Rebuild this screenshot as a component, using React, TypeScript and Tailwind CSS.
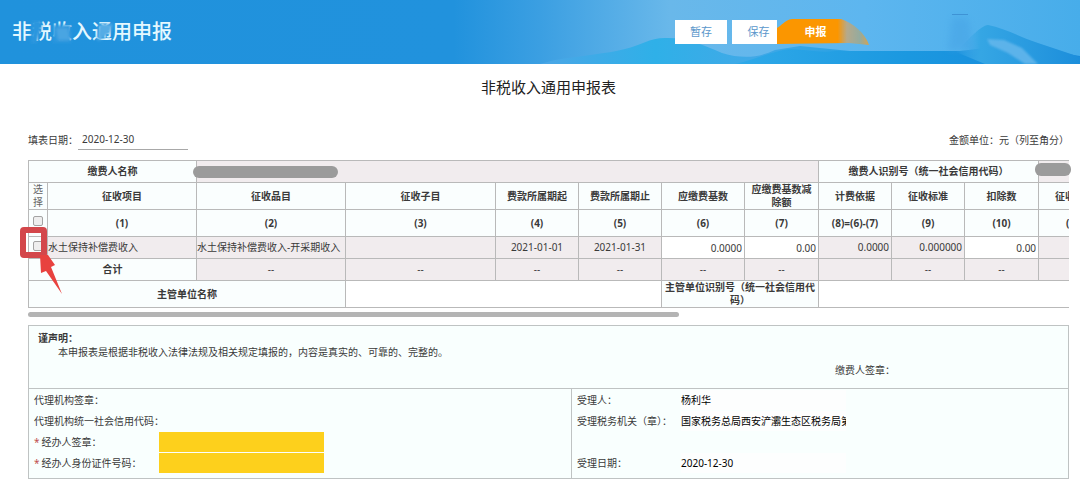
import { useState } from "react";
import clsx from "clsx";

interface Column {
    label: string;
    index: string;
    width: number;
}

const columns: Column[] = [
    { label: "征收项目", index: "(1)", width: 149 },
    { label: "征收品目", index: "(2)", width: 149 },
    { label: "征收子目", index: "(3)", width: 150 },
    { label: "费款所属期起", index: "(4)", width: 83 },
    { label: "费款所属期止", index: "(5)", width: 83 },
    { label: "应缴费基数", index: "(6)", width: 83 },
    { label: "应缴费基数减除额", index: "(7)", width: 74 },
    { label: "计费依据", index: "(8)=(6)-(7)", width: 73 },
    { label: "征收标准", index: "(9)", width: 73 },
    { label: "扣除数", index: "(10)", width: 74 },
    { label: "征收比例", index: "(11)", width: 73 },
];

const totals = ["--", "--", "--", "--", "--", "--", "", "--", "--", ""];

const CELL = "border border-[#b9b9b9] p-0";
const HEAD = `${CELL} bg-[#fafefe] text-center font-bold`;
const READONLY = `${CELL} bg-[#f1ecee]`;

function HeaderScenery() {
    return (
        <svg
            className="absolute inset-0 h-full w-full"
            viewBox="0 0 1080 64"
            preserveAspectRatio="none"
            aria-hidden="true"
        >
            <defs>
                <linearGradient id="sky" x1="0" x2="1" y1="0" y2="0">
                    <stop offset="0" stopColor="#2092dc" />
                    <stop offset="0.42" stopColor="#2192dd" />
                    <stop offset="0.5" stopColor="#3b9fe2" />
                    <stop offset="0.62" stopColor="#69b8ea" />
                    <stop offset="0.8" stopColor="#5db6ef" />
                    <stop offset="1" stopColor="#47adea" />
                </linearGradient>
                <linearGradient id="hill" x1="0" x2="1" y1="0" y2="0">
                    <stop offset="0" stopColor="#4ba6e6" />
                    <stop offset="0.35" stopColor="#2fb0e8" />
                    <stop offset="0.65" stopColor="#41a9e7" />
                    <stop offset="1" stopColor="#259fe2" />
                </linearGradient>
                <linearGradient id="ridge" x1="0" x2="1" y1="0" y2="0">
                    <stop offset="0" stopColor="#2fa9e8" />
                    <stop offset="0.5" stopColor="#1b98e0" />
                    <stop offset="1" stopColor="#1888da" />
                </linearGradient>
                <linearGradient id="peak" x1="0" x2="1" y1="0" y2="0">
                    <stop offset="0" stopColor="#4fb0ec" stopOpacity="0" />
                    <stop offset="0.2" stopColor="#35a6e4" />
                    <stop offset="1" stopColor="#1c8edb" />
                </linearGradient>
                <filter id="soft" x="-50%" y="-30%" width="200%" height="160%">
                    <feGaussianBlur stdDeviation="3" />
                </filter>
                <filter id="softer" x="-30%" y="-30%" width="160%" height="160%">
                    <feGaussianBlur stdDeviation="1" />
                </filter>
            </defs>
            <rect width="1080" height="64" fill="url(#sky)" />
            <path
                d="M555 60C585 55 605 54 625 49C642 45 650 37 668 38C690 38 705 46 722 53C742 59 758 58 775 50L800 46L850 51L870 64H540Z"
                fill="url(#hill)"
            />
            <path
                d="M735 64C760 58 775 50 792 49C808 50 820 53 835 51H960L1010 45L1080 56V64Z"
                fill="url(#ridge)"
            />
            <path d="M956 52C970 38 980 26 988 25C1004 28 1020 37 1038 43L1080 57V64H985Z" fill="url(#peak)" />
            <path d="M952 18H966C974 24 966 42 976 50H948Z" fill="#429fe3" opacity="0.4" filter="url(#soft)" />
            <path d="M952 14.5H968" stroke="#3a8cd0" strokeWidth="1" opacity="0.8" />
            <path
                d="M987 39L1004 40L1022 48L1038 64H1025L1008 53L990 45Z"
                fill="#65b7ec"
                opacity="0.85"
                filter="url(#softer)"
            />
        </svg>
    );
}

/* soft patches lying over the page heading */
function HeadingSmudge() {
    return (
        <svg
            className="pointer-events-none absolute left-0 top-0 h-6 w-40"
            viewBox="0 0 160 24"
            aria-hidden="true"
        >
            <defs>
                <filter id="smudge" x="-40%" y="-40%" width="180%" height="180%">
                    <feGaussianBlur stdDeviation="1.5" />
                </filter>
            </defs>
            <g filter="url(#smudge)">
                <path d="M20 0H30L29 10L24 24H19Z" fill="#2b96de" />
                <path d="M41 5H59V23H41Z" fill="#2b96de" />
                <path d="M44 8H56L58 20H46Z" fill="#4aa5e2" />
                <path d="M87 4H101L98 13L88 20H85Z" fill="#55ace5" />
            </g>
        </svg>
    );
}

function PageHeader() {
    return (
        <header className="relative flex h-16 items-center bg-[#2092dc] pl-3">
            <HeaderScenery />
            <div className="relative">
                <h1 className="text-[20px] font-medium leading-6 text-[#e4f8ff]">非税收入通用申报</h1>
                <HeadingSmudge />
            </div>
            <nav className="relative ml-auto mr-[210px] flex items-center text-[11px]">
                <button type="button" className="h-6 w-[52px] bg-white text-[#5b97cb]">
                    暂存
                </button>
                <button type="button" className="ml-[5px] h-6 w-[45px] bg-white pl-2 text-[#5b97cb]">
                    保存
                </button>
                <button type="button" className="relative h-7 w-[93px] text-white">
                    <svg className="absolute inset-0 h-full w-full" viewBox="0 0 93 28" aria-hidden="true">
                        <defs>
                            <linearGradient id="submit" x1="0" x2="1" y1="0" y2="0">
                                <stop offset="0" stopColor="#fb9600" />
                                <stop offset="0.66" stopColor="#fb9600" />
                                <stop offset="0.76" stopColor="#b5a98b" />
                                <stop offset="0.9" stopColor="#94ab9f" />
                                <stop offset="1" stopColor="#d3a352" />
                            </linearGradient>
                            <filter id="edge">
                                <feGaussianBlur stdDeviation="0.7" />
                            </filter>
                        </defs>
                        <path
                            d="M0 26V10C4 8 8 2 15 1H64C76 5 88 15 92 27L72 25Z"
                            fill="url(#submit)"
                            filter="url(#edge)"
                        />
                    </svg>
                    <span className="relative block pr-4 font-bold">申报</span>
                </button>
            </nav>
        </header>
    );
}

function CheckBox({ label, checked, onChange }: { label: string; checked: boolean; onChange: () => void }) {
    return (
        <input
            type="checkbox"
            aria-label={label}
            checked={checked}
            onChange={onChange}
            className="mx-auto mb-1 block size-[10px] appearance-none rounded-[2px] border border-[#a3a3a3] bg-[#eeeeee] checked:bg-[#5b97cb]"
        />
    );
}

function NumberInput({ label, value }: { label: string; value: string }) {
    return (
        <input
            aria-label={label}
            defaultValue={value}
            className="block h-5 w-full bg-white pr-[2px] text-right text-[10px] outline-none"
        />
    );
}

function DeclarationTable() {
    const [selected, setSelected] = useState(false);
    const toggle = () => setSelected((v) => !v);

    return (
        <div className="relative">
            <div className="overflow-hidden">
                <table className="w-[1665px] table-fixed border-collapse leading-[13px]">
                    <colgroup>
                        <col className="w-[19px]" />
                        {columns.map((c) => (
                            <col key={c.index} style={{ width: c.width }} />
                        ))}
                        <col />
                    </colgroup>
                    <tbody>
                        <tr className="h-[22px]">
                            <th colSpan={2} className={HEAD}>缴费人名称</th>
                            <td colSpan={6} className={READONLY} />
                            <th colSpan={3} className={HEAD}>缴费人识别号（统一社会信用代码）</th>
                            <td colSpan={2} className={READONLY} />
                        </tr>
                        <tr className="h-[27px]">
                            <td className={`${CELL} bg-[#fafefe] text-center text-[#666666]`}>选择</td>
                            {columns.map((c) => (
                                <th key={c.index} className={HEAD}>
                                    <p className="px-[5px] [overflow-wrap:anywhere]">{c.label}</p>
                                </th>
                            ))}
                            <th className={HEAD} />
                        </tr>
                        <tr className="h-[27px]">
                            <td className={HEAD}>
                                <CheckBox label="全选" checked={selected} onChange={toggle} />
                            </td>
                            {columns.map((c) => (
                                <th key={c.index} className={HEAD}>{c.index}</th>
                            ))}
                            <th className={HEAD} />
                        </tr>
                        <tr className="h-[22px] whitespace-nowrap">
                            <td className={HEAD}>
                                <CheckBox label="选择本行" checked={selected} onChange={toggle} />
                            </td>
                            <td className={READONLY}>水土保持补偿费收入</td>
                            <td className={READONLY}>水土保持补偿费收入-开采期收入</td>
                            <td className={READONLY} />
                            <td className={clsx(READONLY, "text-center")}>2021-01-01</td>
                            <td className={clsx(READONLY, "text-center")}>2021-01-31</td>
                            <td className={CELL}><NumberInput label="应缴费基数" value="0.0000" /></td>
                            <td className={CELL}><NumberInput label="应缴费基数减除额" value="0.00" /></td>
                            <td className={READONLY}><p className="pr-[2px] text-right">0.0000</p></td>
                            <td className={READONLY}><p className="pr-[2px] text-right">0.000000</p></td>
                            <td className={CELL}><NumberInput label="扣除数" value="0.00" /></td>
                            <td className={READONLY} />
                            <td className={READONLY} />
                        </tr>
                        <tr className="h-[22px]">
                            <th colSpan={2} className={HEAD}>合计</th>
                            {totals.map((t, i) => (
                                <td key={i} className={clsx(READONLY, "text-center")}>{t}</td>
                            ))}
                            <td className={READONLY} />
                        </tr>
                        <tr className="h-[27px]">
                            <th colSpan={3} className={HEAD}>主管单位名称</th>
                            <td colSpan={3} className={CELL} />
                            <th colSpan={2} className={HEAD}>主管单位识别号（统一社会信用代码）</th>
                            <td colSpan={5} className={CELL} />
                        </tr>
                    </tbody>
                </table>
            </div>

            {/* masked values */}
            <span className="absolute left-[165px] top-[6px] h-3 w-[145px] rounded-full bg-[#9b9b9b]" />
            <span className="absolute left-[1007px] top-[3px] h-[13px] w-9 rounded-md bg-[#9b9b9b]" />

            {/* marker round the row's tick box */}
            <svg
                className="pointer-events-none absolute -left-2 top-[66px] h-[70px] w-11"
                viewBox="0 0 44 70"
                aria-hidden="true"
            >
                <rect x="3" y="4" width="21" height="25" rx="1" fill="none" stroke="#d3474b" strokeWidth="6" strokeLinejoin="round" />
                <path d="M20 29L28 29L35 39L31 41L42 68L26 45L21 47Z" fill="#e8423f" />
            </svg>

            {/* scroll track */}
            <div className="mt-1 h-[5px]">
                <div className="h-full w-5/8 rounded-full bg-[#b4b4b4]" />
            </div>
        </div>
    );
}

interface FieldProps {
    id: string;
    label: string;
    value?: string;
    required?: boolean;
    wide?: boolean;
    className?: string;
}

function Field({ id, label, value, required, wide, className }: FieldProps) {
    return (
        <div className="flex h-[21px] items-center">
            <label htmlFor={id} className={clsx("shrink-0 whitespace-nowrap", wide ? "w-[125px]" : "w-[104px]")}>
                {required && <span className="mr-[2px] text-[#c0504d]">*</span>}
                {label}：
            </label>
            <input
                id={id}
                defaultValue={value}
                className={clsx("h-5 w-[165px] text-[10px] outline-none", className)}
            />
        </div>
    );
}

function StatementPanel() {
    return (
        <section className="mt-2 border border-[#bfc3c3] bg-[#f9fffe]">
            <div className="h-[63px] border-b border-[#bfc3c3] pl-[9px] pt-[5px]">
                <p className="font-bold leading-[14px]">谨声明：</p>
                <p className="pl-5 leading-[15px]">
                    本申报表是根据非税收入法律法规及相关规定填报的，内容是真实的、可靠的、完整的。
                </p>
                <div className="flex h-5 items-center justify-end">
                    <label htmlFor="payer-sign">缴费人签章：</label>
                    <input id="payer-sign" className="h-4 w-[173px] outline-none" />
                </div>
            </div>
            <div className="grid grid-cols-[543fr_496fr]">
                <div className="border-r border-[#bfc3c3] pb-[5px] pl-[5px]">
                    <Field wide id="agency" label="代理机构签章" />
                    <Field wide id="agency-code" label="代理机构统一社会信用代码" />
                    <Field wide required id="handler" label="经办人签章" className="bg-[#fdd01c]" />
                    <Field wide required id="handler-id" label="经办人身份证件号码" className="bg-[#fdd01c]" />
                </div>
                <div className="pb-[5px] pl-[5px]">
                    <Field id="receiver" label="受理人" value="杨利华" className="bg-[#fdfefe] text-black" />
                    <Field
                        id="office"
                        label="受理税务机关（章）"
                        value="国家税务总局西安浐灞生态区税务局第"
                        className="bg-[#fdfefe] text-black"
                    />
                    <div className="h-[21px]" />
                    <Field id="received-on" label="受理日期" value="2020-12-30" className="bg-[#fdfefe] text-black" />
                </div>
            </div>
        </section>
    );
}

export default function App() {
    return (
        <div
            lang="zh-CN"
            className="min-h-screen bg-white font-['Noto_Sans','Noto_Sans_CJK_SC',sans-serif] text-[10px] leading-[14px] text-[#3a3a3a]"
        >
            <PageHeader />
            <main className="pl-7 pr-[11px] pt-3">
                <h2 className="text-center text-[15px] leading-[22px] text-[#222222]">非税收入通用申报表</h2>
                <div className="mb-[10px] mt-[31px] flex items-center justify-between">
                    <div className="flex items-center">
                        <label htmlFor="fill-date">填表日期：</label>
                        <input
                            id="fill-date"
                            defaultValue="2020-12-30"
                            className="h-[21px] w-[110px] border-b border-[#a8a8a8] px-1 text-[10px] outline-none"
                        />
                    </div>
                    <p>金额单位：元（列至角分）</p>
                </div>
                <DeclarationTable />
                <StatementPanel />
            </main>
        </div>
    );
}
